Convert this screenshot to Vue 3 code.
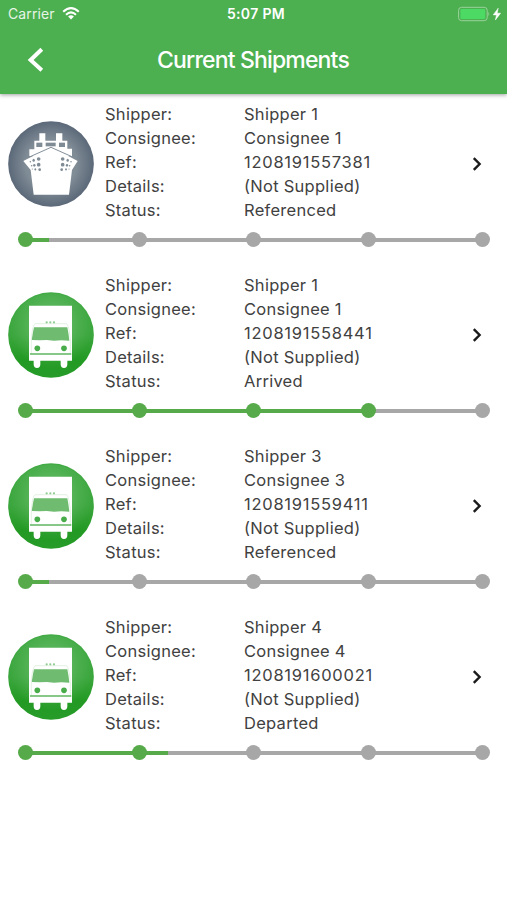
<script setup>
const steps = 5
const shipments = [
  { kind: 'ship', shipper: 'Shipper 1', consignee: 'Consignee 1', number: '1208191557381', status: 'Referenced', reached: 1, progress: 5.2 },
  { kind: 'truck', shipper: 'Shipper 1', consignee: 'Consignee 1', number: '1208191558441', status: 'Arrived', reached: 4, progress: 75 },
  { kind: 'truck', shipper: 'Shipper 3', consignee: 'Consignee 3', number: '1208191559411', status: 'Referenced', reached: 1, progress: 5.2 },
  { kind: 'truck', shipper: 'Shipper 4', consignee: 'Consignee 4', number: '1208191600021', status: 'Departed', reached: 2, progress: 31.2 }
]
const fields = (s) => [
  ['Shipper:', s.shipper],
  ['Consignee:', s.consignee],
  ['Ref:', s.number],
  ['Details:', '(Not Supplied)'],
  ['Status:', s.status]
]
</script>

<template>
  <div class="screen">
    <header class="header">
      <div class="status-bar">
        <div class="carrier">
          <span class="carrier-name">Carrier</span>
          <svg class="wifi" viewBox="0 0 18 13" width="18" height="13">
            <path d="M1.2 4.7 Q9 -2.4 16.8 4.7" />
            <path d="M4 7.7 Q9 3.2 14 7.7" />
            <path class="solid" d="M6.1 9.5 Q9 7.2 11.9 9.5 L9 12.4Z" />
          </svg>
        </div>
        <span class="time">5:07 PM</span>
        <div class="power">
          <svg viewBox="0 0 44 16" width="44" height="16">
            <rect x="0.6" y="1.3" width="28.6" height="13.4" rx="3" fill="none" stroke="#9bd39c" stroke-width="1" />
            <rect x="2.4" y="3.1" width="24.8" height="9.8" rx="1.2" fill="#4cd964" />
            <path d="M30.4 5.7Q32.2 8 30.4 10.3Z" fill="#9bd39c" />
            <path d="M40.2 2.2 35.2 8.9H38.5L37.4 14 42.6 7.2H39.2Z" fill="#fff" stroke="#fff" stroke-width="0.5" />
          </svg>
        </div>
      </div>
      <div class="nav">
        <svg class="back" viewBox="0 0 18 26" width="18" height="26">
          <path d="M14.8 2.3 3.6 13 14.8 23.2" />
        </svg>
        <h1 class="title">Current Shipments</h1>
      </div>
    </header>

    <svg class="defs" width="0" height="0">
      <defs>
        <radialGradient id="slate" cx="50%" cy="50%" r="50%">
          <stop offset="0" stop-color="#8d989f" />
          <stop offset="0.6" stop-color="#7f8b95" />
          <stop offset="1" stop-color="#5b6878" />
        </radialGradient>
        <linearGradient id="leaf" x1="0" y1="0" x2="0" y2="1">
          <stop offset="0" stop-color="#43ab46" />
          <stop offset="0.5" stop-color="#3ba63d" />
          <stop offset="0.78" stop-color="#239a24" />
          <stop offset="1" stop-color="#279c29" />
        </linearGradient>
        <radialGradient id="glow" cx="50%" cy="40%" r="50%">
          <stop offset="0" stop-color="#8ccf8d" stop-opacity="0.8" />
          <stop offset="1" stop-color="#6abd6b" stop-opacity="0" />
        </radialGradient>
      </defs>
    </svg>

    <main>
      <article v-for="s in shipments" :key="s.number" class="shipment">
        <div class="summary">
          <svg v-if="s.kind === 'ship'" class="badge" viewBox="24 27 258 258">
            <circle cx="153" cy="156" r="128.5" fill="url(#slate)" />
            <g fill="#fff">
              <path d="M118 64H136V86H168V64H187V86H202V110H216V132H88V112H103V86H118Z" />
              <path d="M153 104 233 147 216 174 207 248H101L92 174 70 147Z" />
            </g>
            <g fill="#7f8b95">
              <rect x="109" y="92" width="18" height="13" />
              <rect x="137" y="92" width="30" height="11" />
              <rect x="177" y="92" width="18" height="13" />
              <g id="portholes">
                <circle cx="116" cy="141" r="5.5" />
                <circle cx="116" cy="158" r="5.5" />
                <circle cx="119" cy="173" r="4" />
                <ellipse cx="101" cy="145" rx="3.5" ry="4.5" />
                <ellipse cx="103" cy="160" rx="3.5" ry="4" />
                <ellipse cx="106" cy="172" rx="2.5" ry="3.5" />
                <circle cx="91" cy="149" r="2.3" />
                <circle cx="95" cy="161" r="2.3" />
                <circle cx="97" cy="171" r="1.8" />
              </g>
              <use href="#portholes" transform="translate(304 0) scale(-1 1)" />
            </g>
            <path d="M88 135 153 106 218 135" fill="none" stroke="#84909a" stroke-width="3" />
          </svg>
          <svg v-else class="badge" viewBox="24 27 258 258">
            <circle cx="153" cy="156" r="128.5" fill="url(#leaf)" />
            <circle cx="153" cy="156" r="124" fill="url(#glow)" />
            <path d="M87 68H216V233H202V244Q202 255 192 255T182 244V233H121V244Q121 255 111 255T101 244V233H87Z" fill="#fff" />
            <path d="M102 133H202Q206 152 208 173L184 172 162 173 140 171 120 172 95 171Q98 150 102 133Z" fill="#6fbc70" />
            <path d="M94 212V174Q96 130 105 122H200Q208 130 211 174V212" fill="none" stroke="#d3ebd3" stroke-width="2" />
            <path d="M90 213H214" stroke="#5fb660" stroke-width="4" />
            <g fill="#49ac4a">
              <circle cx="112" cy="196" r="8.5" />
              <circle cx="192" cy="196" r="8.5" />
            </g>
            <g fill="#8fcd90">
              <circle cx="140" cy="118" r="3.4" />
              <circle cx="151" cy="118" r="3.4" />
              <circle cx="162" cy="118" r="3.4" />
            </g>
          </svg>
          <dl class="fields">
            <template v-for="f in fields(s)" :key="f[0]">
              <dt>{{ f[0] }}</dt>
              <dd :class="{ digits: f[0] === 'Ref:' }">{{ f[1] }}</dd>
            </template>
          </dl>
          <svg class="chevron" viewBox="0 0 10 16" width="10" height="16">
            <path d="M1.8 2.2 7.6 8 1.8 13.8" />
          </svg>
        </div>
        <div class="track">
          <div class="line"><div class="fill" :style="{ width: s.progress + '%' }"></div></div>
          <span v-for="n in steps" :key="n" class="dot" :class="{ done: n <= s.reached }"></span>
        </div>
      </article>
    </main>
  </div>
</template>

<style>
body {
  background: #fff;
}
</style>

<style scoped>
.screen {
  width: 507px;
  height: 900px;
  overflow: hidden;
  background: #fff;
  color: #414141;
  font-family: Inter, 'Liberation Sans', sans-serif;
}
.header {
  height: 94px;
  position: relative;
  background: #4caf50;
  color: #fff;
  box-shadow: 0 1px 4px rgba(0, 0, 0, 0.38);
}
.status-bar {
  height: 27px;
  display: grid;
  grid-template-columns: 1fr auto 1fr;
  align-items: center;
  padding: 0 5px 0 8px;
}
.carrier {
  display: flex;
  align-items: center;
  gap: 7px;
}
.carrier-name {
  font-size: 14px;
  letter-spacing: 0.1px;
  color: #e6f5e6;
}
.wifi {
  fill: none;
  stroke: #fff;
  stroke-width: 2.1;
}
.wifi .solid {
  fill: #fff;
  stroke: none;
}
.time {
  font-size: 14px;
  font-weight: 600;
  letter-spacing: 0.35px;
  margin-left: 2px;
}
.power {
  display: flex;
  justify-content: flex-end;
}
.nav {
  height: 66px;
  display: grid;
  grid-template-columns: 60px 1fr 60px;
  align-items: center;
}
.back {
  margin-left: 27px;
  fill: none;
  stroke: #fff;
  stroke-width: 4;
}
.title {
  margin: 0 1px 0 0;
  text-align: center;
  font-size: 23px;
  font-weight: 500;
  letter-spacing: -0.84px;
}
.defs {
  display: block;
}
.shipment {
  height: 171px;
}
.summary {
  display: flex;
  align-items: center;
  height: 140px;
  padding: 0 25px 0 8px;
}
.badge {
  width: 86px;
  height: 86px;
  flex: none;
}
.fields {
  flex: 1;
  display: grid;
  grid-template-columns: 139px 1fr;
  grid-auto-rows: 24px;
  line-height: 24px;
  margin: 0 0 4px 11px;
  font-size: 16.5px;
  letter-spacing: 0.27px;
}
.fields dd {
  margin: 0;
}
.fields .digits {
  letter-spacing: 0.74px;
}
.chevron {
  flex: none;
  fill: none;
  stroke: #1b1b1b;
  stroke-width: 2.4;
}
.track {
  position: relative;
  display: flex;
  justify-content: space-between;
  align-items: center;
  height: 15px;
  margin: -2px 17px 0 18px;
}
.line {
  position: absolute;
  left: 7px;
  right: 7px;
  top: 6px;
  height: 4px;
  background: #a7a7a7;
}
.fill {
  height: 100%;
  background: #56aa4a;
}
.dot {
  position: relative;
  width: 15px;
  height: 15px;
  border-radius: 50%;
  background: #a7a7a7;
}
.dot:nth-of-type(3) {
  left: -0.8px;
}
.dot.done {
  background: #56aa4a;
}
</style>
